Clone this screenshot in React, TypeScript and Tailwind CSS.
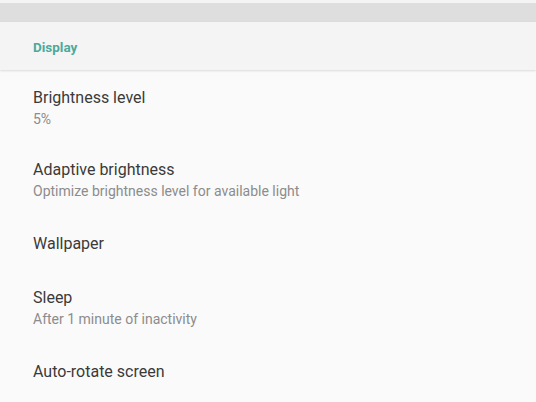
import React from "react";

type Item = {
  title: string;
  summary?: string;
};

const items: Item[] = [
  { title: "Brightness level", summary: "5%" },
  { title: "Adaptive brightness", summary: "Optimize brightness level for available light" },
  { title: "Wallpaper" },
  { title: "Sleep", summary: "After 1 minute of inactivity" },
  { title: "Auto-rotate screen" },
];

const SettingRow = ({ title, summary }: Item) => {
  return (
    <div
      className={`flex flex-col justify-center px-[33px] ${summary ? "h-[72px]" : "h-[56px]"}`}>
      <div className="text-[16px] leading-[20px] text-[#3a3a3a]">{title}</div>
      {summary && (
        <div className="text-[14px] leading-[18px] mt-[2px] text-[#8c8c8c]">{summary}</div>
      )}
    </div>
  );
};

const App = () => {
  return (
    <div
      className="w-[536px] h-[402px] overflow-hidden bg-[#fafafa]"
      style={{ fontFamily: "Roboto, 'Noto Sans', sans-serif" }}>
      <div className="h-[3px] bg-[#f4f4f4]" />
      <div className="h-[19px] bg-[#dedede]" />
      <div className="h-[48px] bg-[#f4f4f4] flex items-center pt-[2px] px-[33px] shadow-[0_1px_2px_rgba(0,0,0,0.12)] relative">
        <span className="text-[13.5px] font-bold text-[#4da99b]">Display</span>
      </div>
      <div className="flex flex-col pt-[2px]">
        {items.map((item) => (
          <SettingRow key={item.title} {...item} />
        ))}
      </div>
    </div>
  );
};

export default App;
